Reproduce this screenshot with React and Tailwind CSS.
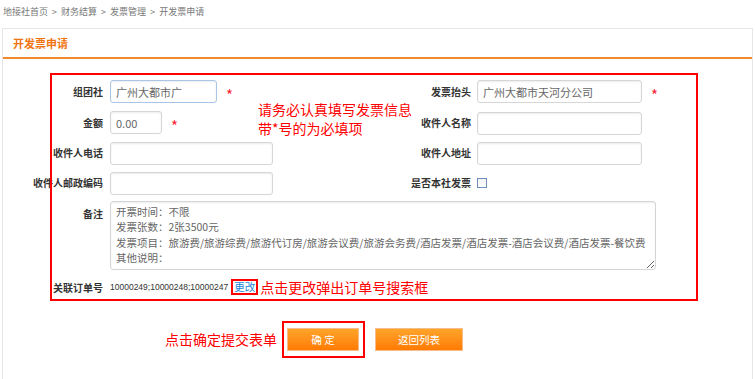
import React from "react";

const cjk = { fontFamily: '"Noto Sans CJK SC", "Noto Sans", sans-serif' };

function Label({ children, className = "" }) {
  return (
    <div
      className={
        "w-[100px] shrink-0 text-right text-[10px] font-bold text-[#333] " +
        className
      }
    >
      {children}
    </div>
  );
}

function Field({ width, value = "", focus = false }) {
  return (
    <input
      readOnly
      value={value}
      style={{ width }}
      className={
        "h-[23px] shrink-0 rounded-[3px] border bg-white px-[5px] text-[11px] text-[#666] outline-none shadow-[inset_0_1px_2px_rgba(0,0,0,0.08)] " +
        (focus ? "border-[#a9c6e6]" : "border-[#d6d6d6]")
      }
    />
  );
}

function Star({ className = "" }) {
  return (
    <span className={"text-[15px] leading-none text-[#f23] " + className}>
      *
    </span>
  );
}

export default function App() {
  const memo =
    "开票时间：不限\n发票张数：2张3500元\n发票项目：旅游费/旅游综费/旅游代订房/旅游会议费/旅游会务费/酒店发票/酒店发票-酒店会议费/酒店发票-餐饮费\n其他说明：";

  return (
    <div
      className="relative h-[379px] w-[755px] overflow-hidden bg-white"
      style={cjk}
    >
      {/* breadcrumb */}
      <div className="h-[28px] pl-[3px] pt-[6px] text-[9px] leading-[12px] text-[#777]">
        地接社首页 <span className="mx-[2px]">&gt;</span> 财务结算{" "}
        <span className="mx-[2px]">&gt;</span> 发票管理{" "}
        <span className="mx-[2px]">&gt;</span> 开发票申请
      </div>

      {/* panel */}
      <div className="ml-[2px] h-[360px] w-[751px] border border-[#e6e6e6] border-b-0">
        <div className="flex h-[30px] items-center border-b-2 border-[#f08a2c] pl-[10px] text-[11px] font-bold text-[#f07412]">
          开发票申请
        </div>

        <div className="pt-[21px]">
          {/* row 1 */}
          <div className="flex h-[23px] items-center">
            <div className="flex w-[368px] items-center">
              <Label>组团社</Label>
              <div className="ml-[7px] flex items-center">
                <Field width={107} value="广州大都市广" focus />
                <Star className="ml-[9px] mt-[5px]" />
              </div>
            </div>
            <Label>发票抬头</Label>
            <div className="ml-[6px] flex items-center">
              <Field width={165} value="广州大都市天河分公司" />
              <Star className="ml-[9px] mt-[5px]" />
            </div>
          </div>

          {/* row 2 */}
          <div className="mt-[8px] flex h-[23px] items-center">
            <div className="flex w-[368px] items-center">
              <Label>金额</Label>
              <div className="ml-[7px] flex items-center">
                <Field width={52} value="0.00" />
                <Star className="ml-[9px] mt-[5px]" />
              </div>
            </div>
            <Label>收件人名称</Label>
            <div className="ml-[6px]">
              <Field width={165} />
            </div>
          </div>

          {/* row 3 */}
          <div className="mt-[7px] flex h-[23px] items-center">
            <div className="flex w-[368px] items-center">
              <Label>收件人电话</Label>
              <div className="ml-[7px]">
                <Field width={163} />
              </div>
            </div>
            <Label>收件人地址</Label>
            <div className="ml-[6px]">
              <Field width={165} />
            </div>
          </div>

          {/* row 4 */}
          <div className="mt-[7px] flex h-[23px] items-center">
            <div className="flex w-[368px] items-center">
              <Label className="-ml-[40px] w-[140px]">收件人邮政编码</Label>
              <div className="ml-[7px]">
                <Field width={163} />
              </div>
            </div>
            <Label>是否本社发票</Label>
            <div className="ml-[6px] h-[10px] w-[10px] border border-[#6f8fbd] bg-gradient-to-b from-[#f2f2f2] to-white" />
          </div>

          {/* row 5 */}
          <div className="mt-[7px] flex">
            <Label className="mt-[5px]">备注</Label>
            <textarea
              readOnly
              wrap="off"
              defaultValue={memo}
              className="ml-[7px] h-[69px] w-[546px] overflow-hidden rounded-[3px] border border-[#d6d6d6] bg-white px-[5px] pt-[2px] text-[10.5px] leading-[15.3px] text-[#666] outline-none shadow-[inset_0_1px_2px_rgba(0,0,0,0.08)]"
            />
          </div>

          {/* row 6 */}
          <div className="mt-[9px] flex h-[16px] items-center">
            <Label>关联订单号</Label>
            <span
              className="ml-[7px] text-[8.5px] text-[#333]"
              style={{ fontFamily: '"Liberation Sans", sans-serif' }}
            >
              10000249;10000248;10000247
            </span>
            <span className="ml-[3px] flex h-[16px] items-center border-2 border-[#f00] px-[1px] text-[10.5px] text-[#1c86d6]">
              更改
            </span>
            <span className="ml-[2px] text-[14px] text-[#f00]">
              点击更改弹出订单号搜索框
            </span>
          </div>

          {/* buttons */}
          <div className="mt-[26px] flex items-center pl-[162px]">
            <span className="mr-[5px] text-[14px] text-[#f00]">
              点击确定提交表单
            </span>
            <div className="border-2 border-[#f00] pb-[5px] pl-[3px] pr-[4px] pt-[5px]">
              <button className="flex h-[23px] w-[72px] items-center justify-center border border-[#f6bd8c] bg-gradient-to-b from-[#ffa428] to-[#ff7a00] text-[10.5px] text-white">
                确&nbsp;定
              </button>
            </div>
            <button className="ml-[10px] flex h-[23px] w-[88px] items-center justify-center border border-[#f6bd8c] bg-gradient-to-b from-[#ffa428] to-[#ff7a00] text-[10.5px] text-white">
              返回列表
            </button>
          </div>
        </div>
      </div>

      {/* annotation overlays */}
      <div className="pointer-events-none absolute left-[50px] top-[73px] h-[228px] w-[648px] border-2 border-[#f00]" />
      <div className="absolute left-[258px] top-[100px] text-[14px] leading-[19px] text-[#f00]">
        请务必认真填写发票信息
        <br />
        带*号的为必填项
      </div>
    </div>
  );
}
